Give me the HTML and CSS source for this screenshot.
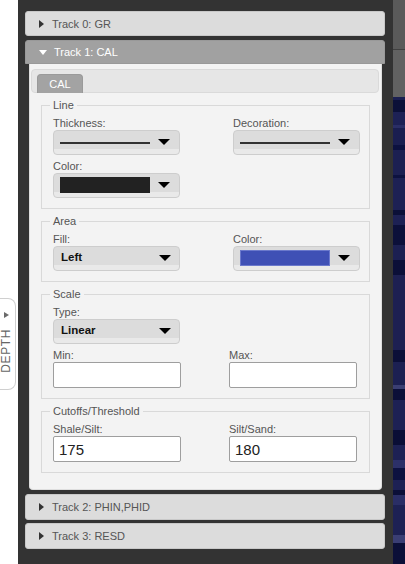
FILE: index.html
```html
<!DOCTYPE html>
<html lang="en">
<head>
<meta charset="utf-8">
<title>Track settings</title>
<link rel="stylesheet" href="styles.css">
</head>
<body>
<div class="page">
  <aside class="gutter">
    <div class="depth-tab">
      <span class="depth-arrow"></span>
      <span class="depth-text">DEPTH</span>
    </div>
  </aside>
  <main class="panel">
    <div class="accordion">
      <h3 class="acc-header"><span class="tri-right"></span>Track 0: GR</h3>
      <h3 class="acc-header active"><span class="tri-down"></span>Track 1: CAL</h3>
      <div class="acc-body">
        <div class="tabs">
          <ul class="tab-nav"><li class="tab">CAL</li></ul>
          <div class="tab-panel">
            <fieldset class="group">
              <legend>Line</legend>
              <div class="row cols-select">
                <div class="field">
                  <label>Thickness:</label>
                  <div class="select"><span class="line-sample"></span><span class="caret"></span></div>
                </div>
                <div class="field">
                  <label>Decoration:</label>
                  <div class="select"><span class="line-sample"></span><span class="caret"></span></div>
                </div>
              </div>
              <div class="row cols-select">
                <div class="field">
                  <label>Color:</label>
                  <div class="select"><span class="swatch swatch-black"></span><span class="caret"></span></div>
                </div>
              </div>
            </fieldset>

            <fieldset class="group">
              <legend>Area</legend>
              <div class="row cols-select">
                <div class="field">
                  <label>Fill:</label>
                  <div class="select"><span class="value">Left</span><span class="caret"></span></div>
                </div>
                <div class="field">
                  <label>Color:</label>
                  <div class="select"><span class="swatch swatch-blue"></span><span class="caret"></span></div>
                </div>
              </div>
            </fieldset>

            <fieldset class="group">
              <legend>Scale</legend>
              <div class="row cols-select">
                <div class="field">
                  <label>Type:</label>
                  <div class="select"><span class="value">Linear</span><span class="caret"></span></div>
                </div>
              </div>
              <div class="row cols-input">
                <div class="field">
                  <label>Min:</label>
                  <input class="text" type="text" value="">
                </div>
                <div class="field">
                  <label>Max:</label>
                  <input class="text" type="text" value="">
                </div>
              </div>
            </fieldset>

            <fieldset class="group">
              <legend>Cutoffs/Threshold</legend>
              <div class="row cols-input">
                <div class="field">
                  <label>Shale/Silt:</label>
                  <input class="text" type="text" value="175">
                </div>
                <div class="field">
                  <label>Silt/Sand:</label>
                  <input class="text" type="text" value="180">
                </div>
              </div>
            </fieldset>
          </div>
        </div>
      </div>
      <h3 class="acc-header gap-top"><span class="tri-right"></span>Track 2: PHIN,PHID</h3>
      <h3 class="acc-header gap-small"><span class="tri-right"></span>Track 3: RESD</h3>
    </div>
  </main>
  <div class="strip"></div>
</div>
</body>
</html>
```
FILE: styles.css
```css
* { box-sizing: border-box; }

html, body {
  margin: 0;
  padding: 0;
  width: 405px;
  height: 564px;
  overflow: hidden;
  background: #fff;
  font-family: "Liberation Sans", Arial, sans-serif;
}

.page {
  display: flex;
  width: 405px;
  height: 564px;
}

/* left gutter with DEPTH tab */
.gutter {
  width: 18px;
  flex: none;
  background: #fff;
  padding-top: 298px;
}

.depth-tab {
  width: 16px;
  height: 92px;
  background: #fff;
  border: 1px solid #cfcfcf;
  border-left: 0;
  border-radius: 0 8px 8px 0;
  display: flex;
  flex-direction: column;
  align-items: center;
  padding-top: 13px;
  padding-right: 3px;
}

.depth-arrow {
  width: 0;
  height: 0;
  border-left: 5px solid #6a6a6a;
  border-top: 3.5px solid transparent;
  border-bottom: 3.5px solid transparent;
}

.depth-text {
  margin-top: 11px;
  writing-mode: vertical-rl;
  transform: rotate(180deg);
  font-size: 12px;
  color: #666;
  letter-spacing: 0.6px;
  line-height: 12px;
}

/* main dark panel */
.panel {
  width: 375px;
  flex: none;
  background: #333;
  padding: 11px 8px 0 7px;
}

.acc-header {
  margin: 0 0 4px;
  height: 25px;
  display: flex;
  align-items: center;
  padding-left: 13px;
  font-size: 11px;
  font-weight: normal;
  color: #555;
  background: #dcdcdc;
  border: 1px solid #c8c8c8;
  border-radius: 3px;
}

.acc-header.active {
  height: 24px;
  margin-bottom: 0;
  background: #a1a1a1;
  border-color: #999;
  color: #fff;
  border-radius: 3px 3px 0 0;
}

.acc-header.gap-top { margin-top: 4px; height: 26px; margin-bottom: 3px; }
.acc-header.gap-small { height: 26px; }

.tri-right {
  width: 0;
  height: 0;
  margin-right: 8px;
  border-left: 5px solid #333;
  border-top: 4px solid transparent;
  border-bottom: 4px solid transparent;
}

.tri-down {
  width: 0;
  height: 0;
  margin-right: 7px;
  border-top: 5px solid #fff;
  border-left: 4px solid transparent;
  border-right: 4px solid transparent;
}

.acc-body {
  margin: 0 3px 0 4px;
  background: #f3f3f3;
  border: 1px solid #dedede;
  border-top: 0;
  border-radius: 0 0 4px 4px;
  padding: 5px 2px 16px 1px;
}

/* tabs */
.tab-nav {
  margin: 0;
  padding: 4px 0 0 5px;
  list-style: none;
  height: 24px;
  display: flex;
  align-items: flex-end;
  background: #e6e6e6;
  border: 1px solid #dadada;
  border-radius: 4px;
}

.tab {
  width: 46px;
  height: 19px;
  margin-bottom: -1px;
  background: #a3a3a3;
  border: 1px solid #9a9a9a;
  border-bottom: 0;
  border-radius: 4px 4px 0 0;
  color: #fff;
  font-size: 11px;
  line-height: 18px;
  text-align: center;
}

.tab-panel {
  padding: 6px 9px 0 10px;
}

/* fieldsets */
.group {
  margin: 0 0 6px;
  padding: 0 9px 10px 11px;
  border: 1px solid #d9d9d9;
  min-width: 0;
}

.group:last-child { margin-bottom: 0; }

.group legend {
  margin-left: -3px;
  padding: 0 3px;
  font-size: 11px;
  line-height: 13px;
  color: #555;
}

.row {
  display: grid;
  margin-top: 5px;
}

.cols-select { grid-template-columns: 180px 127px; }
.cols-input { grid-template-columns: 176px 128px; }

.field label {
  display: block;
  font-size: 11px;
  line-height: 13px;
  color: #555;
}

.select {
  width: 127px;
  height: 25px;
  display: flex;
  align-items: center;
  padding-left: 6px;
  border: 1px solid #cdcdcd;
  border-radius: 4px;
  background: linear-gradient(#dcdcdc 0 78%, #e9e9e9 78%);
}

.line-sample {
  width: 90px;
  height: 2px;
  background: #333;
  flex: none;
}

.swatch {
  width: 90px;
  height: 16px;
  flex: none;
  margin-top: -2px;
}

.swatch-black { background: #222; }
.swatch-blue { background: #3f50b5; border: 1px solid #6b79cc; }

.value {
  width: 91px;
  flex: none;
  padding-left: 1px;
  margin-top: -3px;
  font-size: 11.5px;
  font-weight: bold;
  color: #111;
}

.caret {
  margin-left: 8px;
  margin-top: -1px;
  width: 0;
  height: 0;
  border-top: 6px solid #000;
  border-left: 6px solid transparent;
  border-right: 6px solid transparent;
}

.text {
  display: block;
  width: 128px;
  height: 26px;
  margin: 0;
  padding: 0 5px;
  border: 1px solid #9e9e9e;
  border-radius: 2px;
  background: #fff;
  font-family: "Liberation Sans", Arial, sans-serif;
  font-size: 15px;
  color: #222;
}

/* right strip */
.strip {
  width: 12px;
  flex: none;
  background: linear-gradient(to bottom,
    #5a5a5a 0 49px, #404040 49px 50px, #626262 50px 97px,
    #1b1f52 97px 100px, #0b1038 100px 112px, #1d2155 112px 125px,
    #2a2e66 125px 128px, #1a1e50 128px 145px, #0c1140 145px 150px,
    #1c2052 150px 175px, #0d1240 175px 178px, #1d2154 178px 210px,
    #0b1038 210px 215px, #1d2154 215px 225px, #0c103a 225px 245px,
    #1c2052 245px 260px, #0b0f38 260px 275px, #1d2052 275px 350px,
    #0b0f38 350px 362px, #1c2052 362px 385px, #3a3e72 385px 389px,
    #0b0f38 389px 400px, #1d2154 400px 430px, #0a0e36 430px 445px,
    #1d2154 445px 460px, #2c3068 460px 468px, #0d1140 468px 480px,
    #1d2154 480px 490px, #0b0f38 490px 495px, #2a2e66 495px 505px,
    #1d2154 505px 535px, #3a3e74 535px 543px, #0b0f38 543px 564px);
}
```
